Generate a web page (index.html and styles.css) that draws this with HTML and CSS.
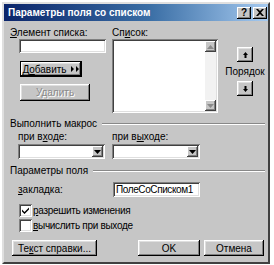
FILE: index.html
```html
<!DOCTYPE html>
<html lang="ru">
<head>
    <meta charset="UTF-8">
    <title>Параметры поля со списком</title>
    <link rel="stylesheet" href="styles.css">
</head>
<body>
    <div class="dialog">
        <div class="titlebar">
            <span class="title">Параметры поля со списком</span>
            <span class="title-btn">?</span>
            <span class="title-btn close">
                <svg width="8" height="7" viewBox="0 0 8 7"><path d="M0 0h2l2 2 2-2h2L5 3.5 8 7H6L4 5 2 7H0l3-3.5z" fill="#000"/></svg>
            </span>
        </div>

        <div class="content">
            <div class="lists">
                <div class="col-item">
                    <div class="label"><u>Э</u>лемент списка:</div>
                    <div class="field item-field"></div>
                    <button class="btn default add-btn">Д<u>о</u>бавить
                        <svg class="arrows" width="9" height="6" viewBox="0 0 9 6"><path d="M0 0l3 3-3 3zM5 0l3 3-3 3z" fill="#000"/></svg>
                    </button>
                    <button class="btn del-btn" disabled>Удалить</button>
                </div>
                <div class="col-list">
                    <div class="label">Сп<u>и</u>сок:</div>
                    <div class="field listbox">
                        <div class="scrollbar">
                            <span class="sb-btn"><svg width="7" height="4" viewBox="0 0 7 4"><path d="M3.5 0L7 4H0z" fill="#8a8a8a"/></svg></span>
                            <span class="sb-btn"><svg width="7" height="4" viewBox="0 0 7 4"><path d="M0 0h7L3.5 4z" fill="#8a8a8a"/></svg></span>
                        </div>
                    </div>
                </div>
                <div class="col-order">
                    <button class="btn order-btn">
                        <svg width="5" height="6" viewBox="0 0 5 6"><path d="M2.5 0L5 3H3.5v3h-2V3H0z" fill="#000"/></svg>
                    </button>
                    <div class="order-label">Порядок</div>
                    <button class="btn order-btn">
                        <svg width="5" height="6" viewBox="0 0 5 6"><path d="M1.5 0h2v3H5L2.5 6 0 3h1.5z" fill="#000"/></svg>
                    </button>
                </div>
            </div>

            <div class="group-head">
                <span>Выполнить макрос</span>
                <span class="etched"></span>
            </div>
            <div class="macros">
                <div class="macro">
                    <div class="label">при в<u>х</u>оде:</div>
                    <div class="field combo"><span class="drop"><svg width="7" height="4" viewBox="0 0 7 4"><path d="M0 0h7L3.5 4z" fill="#000"/></svg></span></div>
                </div>
                <div class="macro">
                    <div class="label">при в<u>ы</u>ходе:</div>
                    <div class="field combo"><span class="drop"><svg width="7" height="4" viewBox="0 0 7 4"><path d="M0 0h7L3.5 4z" fill="#000"/></svg></span></div>
                </div>
            </div>

            <div class="group-head params-head">
                <span>Параметры поля</span>
                <span class="etched"></span>
            </div>
            <div class="bookmark-row">
                <span class="bookmark-label"><u>з</u>акладка:</span>
                <div class="field text-field">ПолеСоСписком1</div>
            </div>
            <div class="checks">
                <div class="check-row">
                    <span class="checkbox">
                        <svg width="7" height="7" viewBox="0 0 7 7"><path d="M0 2.5l2.5 2.5L7 0.5V2.5L2.5 7 0 4.5z" fill="#000"/></svg>
                    </span>
                    <span class="check-text"><u>р</u>азрешить изменения</span>
                </div>
                <div class="check-row">
                    <span class="checkbox"></span>
                    <span class="check-text"><u>в</u>ычислить при выходе</span>
                </div>
            </div>

            <div class="footer">
                <button class="btn help-btn">Те<u>к</u>ст справки...</button>
                <button class="btn ok-btn">OK</button>
                <button class="btn cancel-btn">Отмена</button>
            </div>
        </div>
    </div>
</body>
</html>
```

FILE: styles.css
```css
body {
    margin: 0;
    padding: 2px 0 0 2px;
    background-color: #ffffff;
    font-family: "Liberation Sans", Arial, sans-serif;
    font-size: 10px;
    color: #000;
}
.dialog {
    width: 264px;
    background-color: #c6c6c6;
    border: 2px solid;
    border-color: #dfdfdf #404040 #404040 #dfdfdf;
}
.titlebar {
    height: 17px;
    display: flex;
    align-items: center;
    padding: 0 1px 0 4px;
    background: linear-gradient(to right, #0a246a, #3a6ea5 55%, #a6caf0);
    color: #fff;
}
.title {
    flex: 1;
    font-weight: bold;
    font-size: 10px;
}
.title-btn {
    width: 14px;
    height: 12px;
    margin-left: 2px;
    background-color: #c6c6c6;
    color: #000;
    font-weight: bold;
    font-size: 10px;
    display: flex;
    align-items: center;
    justify-content: center;
    box-shadow: inset -1px -1px #000, inset 1px 1px #fff, inset -2px -2px #808080;
}
.content {
    padding: 5px 0 6px 6px;
}
.label {
    height: 13px;
    line-height: 13px;
    white-space: nowrap;
}
.field {
    background-color: #fff;
    box-shadow: inset 1px 1px #808080, inset -1px -1px #fff, inset 2px 2px #404040, inset -2px -2px #dfdfdf;
    box-sizing: border-box;
}
.btn {
    font-family: inherit;
    font-size: 10px;
    background-color: #c6c6c6;
    border: none;
    padding: 0;
    height: 16px;
    box-sizing: border-box;
    box-shadow: inset -1px -1px #000, inset 1px 1px #fff, inset -2px -2px #808080, inset 2px 2px #dfdfdf;
    display: flex;
    align-items: center;
    justify-content: center;
}
.btn.default {
    border: 1px solid #000;
}
.btn:disabled {
    color: #8a8a8a;
    text-shadow: 1px 1px #fff;
}
.lists {
    display: flex;
}
.col-item {
    width: 102px;
}
.item-field {
    width: 87px;
    height: 14px;
    margin: 0 0 0 9px;
}
.add-btn {
    width: 62px;
    margin: 8px 0 0 10px;
}
.arrows {
    margin-left: 4px;
}
.del-btn {
    width: 70px;
    margin: 7px 0 0 10px;
    height: 17px;
}
.col-list {
    width: 106px;
}
.listbox {
    height: 74px;
    display: flex;
    justify-content: flex-end;
    padding: 2px;
}
.scrollbar {
    width: 11px;
    display: flex;
    flex-direction: column;
    justify-content: space-between;
    background-color: #f2f2f2;
}
.sb-btn {
    height: 11px;
    background-color: #c6c6c6;
    display: flex;
    align-items: center;
    justify-content: center;
    box-shadow: inset -1px -1px #404040, inset 1px 1px #fff, inset -2px -2px #808080;
}
.col-order {
    flex: 1;
    display: flex;
    flex-direction: column;
    align-items: center;
    padding: 21px 0 0 4px;
}
.order-btn {
    width: 16px;
    height: 15px;
}
.order-label {
    margin: 3px 0 3px;
    height: 13px;
    line-height: 13px;
}
.group-head {
    display: flex;
    align-items: center;
    height: 13px;
    margin-top: 4px;
    margin-right: 3px;
}
.etched {
    flex: 1;
    margin-left: 5px;
    border-top: 1px solid #888;
    border-bottom: 1px solid #fff;
}
.macros {
    display: flex;
    padding-left: 8px;
}
.macro {
    width: 94px;
}
.macro .label {
    margin-bottom: 1px;
}
.combo {
    width: 87px;
    height: 15px;
    display: flex;
    justify-content: flex-end;
    padding: 2px;
}
.macro + .macro .combo {
    width: 88px;
}
.drop {
    width: 11px;
    background-color: #c6c6c6;
    display: flex;
    align-items: center;
    justify-content: center;
    box-shadow: inset -1px -1px #404040, inset 1px 1px #fff, inset -2px -2px #808080;
}
.params-head {
    margin-top: 5px;
}
.bookmark-row {
    display: flex;
    align-items: center;
    margin-top: 5px;
    padding-left: 8px;
}
.bookmark-label {
    width: 95px;
}
.text-field {
    width: 87px;
    height: 15px;
    line-height: 15px;
    padding-left: 3px;
    letter-spacing: -0.4px;
}
.checks {
    margin-top: 7px;
    padding-left: 9px;
    display: flex;
    flex-direction: column;
    gap: 2px;
}
.check-row {
    display: flex;
    align-items: center;
    height: 13px;
    gap: 1px;
}
.check-text {
    letter-spacing: -0.3px;
}
.checkbox {
    width: 13px;
    height: 13px;
    box-sizing: border-box;
    background-color: #fff;
    box-shadow: inset 1px 1px #808080, inset -1px -1px #fff, inset 2px 2px #404040, inset -2px -2px #dfdfdf;
    display: flex;
    align-items: center;
    justify-content: center;
}
.footer {
    display: flex;
    margin-top: 8px;
    padding-left: 2px;
}
.help-btn {
    width: 85px;
}
.ok-btn {
    width: 62px;
    margin-left: 41px;
}
.cancel-btn {
    width: 60px;
    margin-left: 4px;
}
```
